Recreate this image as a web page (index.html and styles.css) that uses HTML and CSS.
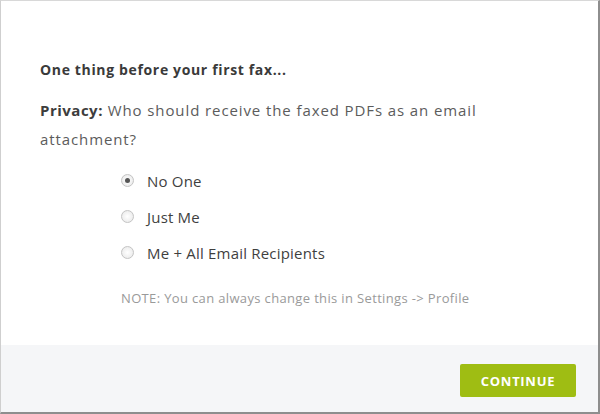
FILE: index.html
```html
<!DOCTYPE html>
<html>
<head>
<meta charset="utf-8">
<link rel="stylesheet" href="styles.css">
</head>
<body>
<div class="dialog">
  <div class="content">
    <h2 class="title">One thing before your first fax...</h2>
    <p class="question"><strong>Privacy:</strong> Who should receive the faxed PDFs as an email attachment?</p>
    <div class="options">
      <label class="option"><span class="radio checked"></span><span class="label">No One</span></label>
      <label class="option"><span class="radio"></span><span class="label">Just Me</span></label>
      <label class="option"><span class="radio"></span><span class="label">Me + All Email Recipients</span></label>
      <p class="note">NOTE: You can always change this in Settings -&gt; Profile</p>
    </div>
  </div>
  <div class="footer">
    <button class="continue">CONTINUE</button>
  </div>
</div>
</body>
</html>
```

FILE: styles.css
```css
html, body {
  margin: 0;
  padding: 0;
  background: #fff;
}
.dialog {
  box-sizing: border-box;
  width: 600px;
  height: 414px;
  border-top: 1px solid #d8d8d8;
  border-left: 1px solid #cfcfcf;
  border-right: 2px solid #8e8e8e;
  border-bottom: 2px solid #8e8e8e;
  display: flex;
  flex-direction: column;
  font-family: "Open Sans", sans-serif;
}
.content {
  height: 344px;
  box-sizing: border-box;
  padding: 53px 70px 0 39px;
  background: #fff;
}
.title {
  margin: 0;
  font-size: 14px;
  font-weight: 700;
  color: #3a3a3a;
  line-height: 32px;
  letter-spacing: 0.65px;
}
.question {
  margin: 10px 0 0;
  font-size: 15px;
  line-height: 29px;
  color: #5c5c5c;
  letter-spacing: 0.9px;
}
.question strong {
  color: #3d3d3d;
  letter-spacing: 0.5px;
}
.options {
  margin: 15px 0 0 81px;
  display: flex;
  flex-direction: column;
  gap: 13px;
}
.option {
  display: flex;
  align-items: center;
  gap: 13px;
  height: 23px;
  font-size: 15px;
  letter-spacing: 0.2px;
  color: #3f3f3f;
}
.radio {
  box-sizing: border-box;
  width: 13px;
  height: 13px;
  border-radius: 50%;
  border: 1px solid #c4c4c4;
  background: radial-gradient(circle, #fff 0, #e6e6e6 100%);
  display: inline-flex;
  align-items: center;
  justify-content: center;
}
.radio.checked::after {
  content: "";
  width: 5px;
  height: 5px;
  border-radius: 50%;
  background: #555;
}
.note {
  margin: 12px 0 0;
  font-size: 13px;
  color: #9a9a9a;
  letter-spacing: 0.35px;
}
.footer {
  flex: 1;
  background: #f5f6f8;
  display: flex;
  justify-content: flex-end;
  align-items: flex-start;
  padding: 19px 22px 0 0;
}
.continue {
  width: 116px;
  height: 33px;
  border: none;
  border-radius: 2px;
  background: #9fbd13;
  color: #fff;
  font-family: "Open Sans", sans-serif;
  font-weight: 700;
  font-size: 13px;
  letter-spacing: 0.7px;
  padding: 0;
}
```
